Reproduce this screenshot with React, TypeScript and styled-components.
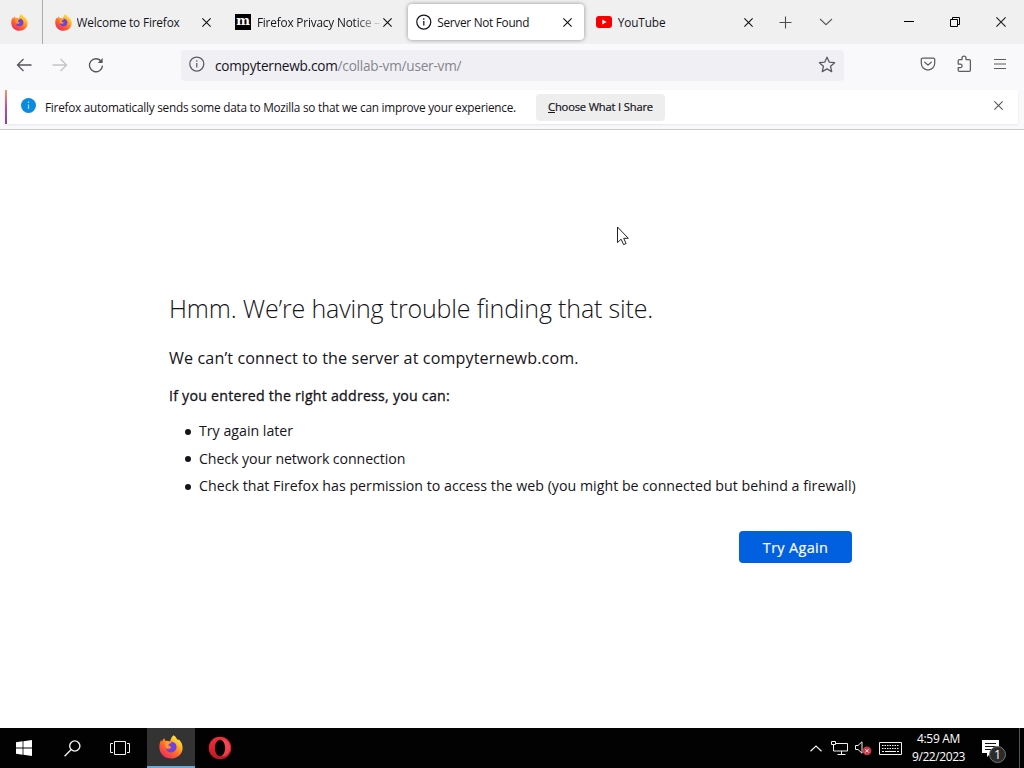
import React from 'react';
import styled, { createGlobalStyle } from 'styled-components';

const App = () => {
  return (
    <Screen>
      <GlobalStyle />
      <TabStrip>
        <PinnedTab>
          <FirefoxLogo size={17} id="pinned" />
        </PinnedTab>
        <Tabs>
          <BrowserTab icon={<FirefoxLogo size={17} id="welcome" />} title="Welcome to Firefox" spacing={-0.16} />
          <BrowserTab icon={<MozillaLogo />} title="Firefox Privacy Notice –" spacing={-0.17} faded />
          <BrowserTab icon={<InfoIcon color="#15141a" />} title="Server Not Found" spacing={-0.28} selected />
          <BrowserTab icon={<YouTubeLogo />} title="YouTube" spacing={-0.1} />
        </Tabs>
        <NewTabButton>
          <svg width="13" height="13" viewBox="0 0 13 13" fill="none" stroke="#4c4c50" strokeWidth="1.1">
            <path d="M6.5 0.5v12M0.5 6.5h12" />
          </svg>
        </NewTabButton>
        <ListTabsButton>
          <svg width="14" height="8" viewBox="0 0 14 8" fill="none" stroke="#5b5b60" strokeWidth="1.2">
            <path d="M1 1l6 5.6L13 1" />
          </svg>
        </ListTabsButton>
        <WindowControls>
          <WindowButton>
            <svg width="10" height="10" viewBox="0 0 10 10" stroke="#000">
              <path d="M0 4.5h10" />
            </svg>
          </WindowButton>
          <WindowButton>
            <svg width="10" height="10" viewBox="0 0 10 10" fill="none" stroke="#000">
              <path d="M0.5 2.5h7v7h-7zM2.5 2.5v-2h7v7h-2" />
            </svg>
          </WindowButton>
          <WindowButton>
            <CloseIcon size={10} color="#222" />
          </WindowButton>
        </WindowControls>
      </TabStrip>

      <NavBar>
        <NavButton>
          <svg width="16" height="14" viewBox="0 0 16 14" fill="none" stroke="#55555b" strokeWidth="1.3">
            <path d="M15.5 7H1.5M7.5 1L1.5 7l6 6" />
          </svg>
        </NavButton>
        <NavButton>
          <svg width="16" height="14" viewBox="0 0 16 14" fill="none" stroke="#c3c3c8" strokeWidth="1.3">
            <path d="M0.5 7h14M8.5 1l6 6-6 6" />
          </svg>
        </NavButton>
        <NavButton>
          <svg width="16" height="16" viewBox="0 0 16 16" fill="none" stroke="#55555b" strokeWidth="1.3">
            <path d="M13.4 4.6A6.5 6.5 0 1 0 14.5 8.6" />
            <path d="M14.6 1v4.9H9.8z" fill="#55555b" stroke="none" />
          </svg>
        </NavButton>
        <UrlBar>
          <InfoIcon color="#5b5b66" />
          <Url>
            compyternewb.com<UrlPath>/collab-vm/user-vm/</UrlPath>
          </Url>
          <svg width="18" height="17" viewBox="0 0 18 17" fill="none" stroke="#5b5b66" strokeWidth="1.3" strokeLinejoin="round">
            <path d="M9 1.2l2.2 4.9 5.4.6-4 3.6 1.1 5.3L9 12.9l-4.7 2.7 1.1-5.3-4-3.6 5.4-.6z" />
          </svg>
        </UrlBar>
        <ToolbarIcons>
          <NavButton $raised>
            <svg width="16" height="16" viewBox="0 0 16 16" fill="none" stroke="#5b5b60" strokeWidth="1.25" strokeLinecap="round" strokeLinejoin="round">
              <path d="M2.6 2h10.8c.7 0 1.3.6 1.3 1.3v4a6.7 6.7 0 0 1-13.4 0v-4C1.3 2.6 1.9 2 2.6 2z" />
              <path d="M4.8 6.2L8 9.1l3.2-2.9" />
            </svg>
          </NavButton>
          <NavButton $raised>
            <svg width="16" height="18" viewBox="0 0 16 18" fill="none" stroke="#5b5b60" strokeWidth="1.25" strokeLinejoin="round">
              <path d="M6 4.6V3.2a2 2 0 0 1 4 0v1.4h3.2c.7 0 1.2.5 1.2 1.2v9.4c0 .7-.5 1.2-1.2 1.2H3.4c-.7 0-1.2-.5-1.2-1.2v-2.6h2.1a1.8 1.8 0 0 0 0-3.6H2.2V5.8c0-.7.5-1.2 1.2-1.2z" />
            </svg>
          </NavButton>
          <NavButton $raised>
            <svg width="12" height="12" viewBox="0 0 12 12" stroke="#5b5b60" strokeWidth="1.2">
              <path d="M0 1.5h12M0 6h12M0 10.5h12" />
            </svg>
          </NavButton>
        </ToolbarIcons>
      </NavBar>

      <NotificationArea>
        <Notification>
          <NoticeIcon width="15" height="15" viewBox="0 0 15 15">
            <circle cx="7.5" cy="7.5" r="7.5" fill="#0a8ae0" />
            <path d="M7.5 6.5V11M7.5 3.6V5" stroke="#a5d8f5" strokeWidth="1.3" />
          </NoticeIcon>
          <NoticeText>
            Firefox automatically sends some data to Mozilla so that we can improve your experience.
          </NoticeText>
          <ChooseButton>
            <u>C</u>hoose What I Share
          </ChooseButton>
          <NoticeClose>
            <CloseIcon size={9} color="#55555b" />
          </NoticeClose>
        </Notification>
      </NotificationArea>

      <Page>
        <Heading>Hmm. We’re having trouble finding that site.</Heading>
        <ShortDescription>We can’t connect to the server at compyternewb.com.</ShortDescription>
        <Advice>If you entered the right address, you can:</Advice>
        <AdviceList>
          <AdviceItem $spacing={0}>Try again later</AdviceItem>
          <AdviceItem $spacing={-0.09}>Check your network connection</AdviceItem>
          <AdviceItem $spacing={0.015}>
            Check that Firefox has permission to access the web (you might be connected but behind a firewall)
          </AdviceItem>
        </AdviceList>
        <TryAgainButton>Try Again</TryAgainButton>
        <Pointer width="13" height="20" viewBox="0 0 13 20">
          <path d="M0.5 1v15.6l3.6-3.4 2.5 5.4 2.5-1.1-2.4-5.2h4.6z" fill="#fff" stroke="#222" strokeWidth="1" />
        </Pointer>
      </Page>

      <Taskbar>
        <TaskButton>
          <svg width="16" height="16" viewBox="0 0 16 16" fill="#fff">
            <path d="M0 2.2l6.6-.9v6.3H0zM7.4 1.2L16 0v7.6H7.4zM0 8.4h6.6v6.3L0 13.8zM7.4 8.4H16V16l-8.6-1.2z" />
          </svg>
        </TaskButton>
        <TaskButton>
          <svg width="17" height="17" viewBox="0 0 17 17" fill="none" stroke="#f2f2f2" strokeWidth="1.4">
            <circle cx="10.8" cy="6" r="5.1" />
            <path d="M7.2 9.6L0.6 16.3" />
          </svg>
        </TaskButton>
        <TaskButton>
          <svg width="20" height="14" viewBox="0 0 20 14" fill="none" stroke="#f2f2f2" strokeWidth="1">
            <path d="M4.5 0.5h11v13h-11zM3 2.5H0.5v9H3M17 2.5h2.5v9H17" />
          </svg>
        </TaskButton>
        <TaskButton $active>
          <FirefoxLogo size={24} id="task" />
        </TaskButton>
        <TaskButton>
          <svg width="24" height="24" viewBox="0 0 24 24">
            <defs>
              <linearGradient id="opera" x1="0" y1="0" x2="0" y2="1">
                <stop offset="0" stopColor="#f0303c" />
                <stop offset="1" stopColor="#c01624" />
              </linearGradient>
            </defs>
            <path fillRule="evenodd" fill="url(#opera)" d="M12 .7a11.3 11.3 0 1 0 0 22.6A11.3 11.3 0 0 0 12 .7zM12 3.8c3 0 5 3.6 5 8.2s-2 8.2-5 8.2S7 16.6 7 12s2-8.2 5-8.2z" />
            <path fill="#ff6a70" opacity=".5" d="M13.5 3.8c2.5-.7 5.5.7 7.3 3.5 2 3.2 1.7 7.5-.6 10.2-1.7 2-4.3 3-6.5 2.5 2.3-1 3.5-4.3 3.5-8s-1.4-7.2-3.7-8.2z" />
          </svg>
        </TaskButton>
        <Tray>
          <TrayIcon width="12" height="7" viewBox="0 0 12 7" fill="none" stroke="#f2f2f2" strokeWidth="1.2">
            <path d="M0.5 6.3L6 1l5.5 5.3" />
          </TrayIcon>
          <TrayIcon width="17" height="14" viewBox="0 0 17 14" fill="none" stroke="#f2f2f2" $gap={9}>
            <path d="M5 2.5h11.5v7.5H5.5M0.5 0.5h4v3h-4zM2.5 3.5v6.5h3M10.5 10v3M6.5 13.5h8" />
          </TrayIcon>
          <TrayIcon width="18" height="16" viewBox="0 0 18 16" fill="none" stroke="#f2f2f2" $gap={7}>
            <path d="M0.5 5.5h2.5L7 1.8v11.4L3 9.5H0.5z" />
            <circle cx="12" cy="10.8" r="4.4" fill="#c83a46" stroke="none" />
            <path d="M10.3 9.1l3.4 3.4M13.7 9.1l-3.4 3.4" />
          </TrayIcon>
          <TrayIcon width="23" height="13" viewBox="0 0 23 13" fill="none" stroke="#f2f2f2" $gap={6}>
            <path d="M0.5 0.5h22v12h-22z" />
            <path d="M3 3.5h17M3 6.5h17" strokeDasharray="1.5 1" />
            <path d="M3 9.5h2M6 9.5h11M18 9.5h2" />
          </TrayIcon>
          <Clock>
            <ClockLine $spacing={-0.3}>4:59 AM</ClockLine>
            <ClockLine $spacing={-0.42}>9/22/2023</ClockLine>
          </Clock>
          <ActionCenter>
            <svg width="17" height="17" viewBox="0 0 17 17">
              <path d="M0 0h17v13h-8l-4 4v-4H0z" fill="#fff" />
              <path d="M3 3.5h11M3 6.5h11M3 9.5h6" stroke="#111" />
            </svg>
            <Badge>1</Badge>
          </ActionCenter>
          <ShowDesktop />
        </Tray>
      </Taskbar>
    </Screen>
  );
};

interface BrowserTabProps {
  icon: React.ReactNode;
  title: string;
  spacing: number;
  selected?: boolean;
  faded?: boolean;
}

const BrowserTab = ({ icon, title, spacing, selected, faded }: BrowserTabProps) => {
  return (
    <TabBox $selected={selected}>
      <TabIcon>{icon}</TabIcon>
      <TabTitle $spacing={spacing} $faded={faded}>
        {title}
      </TabTitle>
      <CloseIcon size={9} color="#111" />
    </TabBox>
  );
};

const CloseIcon = ({ size, color }: { size: number; color: string }) => (
  <svg width={size} height={size} viewBox="0 0 10 10" fill="none" stroke={color} strokeWidth="1.2">
    <path d="M0.4 0.4l9.2 9.2M9.6 0.4L0.4 9.6" />
  </svg>
);

const InfoIcon = ({ color }: { color: string }) => (
  <svg width="16" height="16" viewBox="0 0 16 16" fill="none" stroke={color} strokeWidth="1.25">
    <circle cx="7.8" cy="8" r="7" />
    <path d="M7.8 7v4.6M7.8 4.2v1.5" />
  </svg>
);

const MozillaLogo = () => <MozillaBox>m</MozillaBox>;

const YouTubeLogo = () => (
  <svg width="16" height="12" viewBox="0 0 16 12">
    <rect width="16" height="12" rx="3" fill="#f60002" />
    <path d="M6.3 3.5v5L10.6 6z" fill="#fff" />
  </svg>
);

const FirefoxLogo = ({ size, id }: { size: number; id: string }) => (
  <svg width={size} height={size} viewBox="0 0 24 24">
    <defs>
      <linearGradient id={`${id}-flame`} x1=".85" y1=".05" x2=".2" y2=".95">
        <stop offset="0" stopColor="#fff04a" />
        <stop offset=".3" stopColor="#ffb52b" />
        <stop offset=".6" stopColor="#ff6a2b" />
        <stop offset="1" stopColor="#f02a5c" />
      </linearGradient>
    </defs>
    <path
      fill={`url(#${id}-flame)`}
      d="M14.6.2c2 1.300 3 2.800 3.500 4.300 1-.2 1.700 0 2.300.6 2 2 3.200 4.800 3.200 7.900C23.600 19 18.500 23.600 12 23.600S.4 18.800.4 12.600c0-3 .5-5.700 1.800-7.800.1 1 .3 1.600.6 2 .6-1.500 1.500-2.800 2.700-3.800 0 1.300.3 2.200 1 2.900 1.700-.5 3.300-.2 4.600.6.5-2.600 1.500-4.900 3.500-6.300z"
    />
    <path fill="#7044dc" d="M11.8 6.8c3.5-.2 5.8 2.2 5.8 5.2s-2.4 5.4-5.5 5.4c-2.8 0-5-1.9-5.2-4.5 1 1.3 3 1.7 4.5.7 1.1-.8 1.4-1.4.2-1.8-1.9-.4-2.6-1-2.5-2.1.7-1.1 2-1.7 3.5-1.7z" />
    <path fill="#ff9b2d" d="M6.5 7c1.9-.8 4-.5 5.6 1.1-1 .1-2 .6-2.6 1.5-.4.8.2 1.6 2 1.9-.8 1.6-2.6 2.1-4.6 1.4C6.2 10.9 6.1 8.8 6.5 7z" />
  </svg>
);

const GlobalStyle = createGlobalStyle`
  * {
    box-sizing: border-box;
  }
  body {
    margin: 0;
    overflow: hidden;
    font-family: 'Open Sans', 'Noto Sans', sans-serif;
    color: #15141a;
  }
  svg {
    display: block;
    flex-shrink: 0;
  }
`;

const Screen = styled.div`
  display: flex;
  flex-direction: column;
  width: 1024px;
  height: 768px;
  background-color: #fff;
`;

const TabStrip = styled.div`
  display: flex;
  height: 44px;
  background-color: #f0f0f0;
`;

const PinnedTab = styled.div`
  display: flex;
  align-items: center;
  width: 43px;
  padding-left: 11px;
  border-right: 1px solid #adadad;
`;

const Tabs = styled.div`
  display: flex;
  align-items: center;
  gap: 4px;
  padding-left: 4px;
`;

const TabBox = styled.div<{ $selected?: boolean }>`
  display: flex;
  align-items: center;
  width: 176.4px;
  height: 36px;
  padding: 0 12px 0 8px;
  border-radius: 4px;
  background-color: ${({ $selected }) => ($selected ? '#fff' : 'transparent')};
  box-shadow: ${({ $selected }) => ($selected ? '0 0 4px rgba(0, 0, 0, 0.4)' : 'none')};
`;

const TabIcon = styled.div`
  display: flex;
  width: 16px;
  margin-right: 5.5px;
`;

const TabTitle = styled.div<{ $spacing: number; $faded?: boolean }>`
  flex: 1;
  overflow: hidden;
  font-size: 11.8px;
  line-height: 20px;
  letter-spacing: ${({ $spacing }) => $spacing}px;
  white-space: nowrap;
  mask-image: ${({ $faded }) => ($faded ? 'linear-gradient(to left, transparent, #000 28px)' : 'none')};
`;

const MozillaBox = styled.div`
  width: 16px;
  height: 16px;
  background-color: #000;
  color: #fff;
  font-family: 'DejaVu Serif', serif;
  font-size: 13px;
  font-weight: bold;
  line-height: 14px;
  text-align: center;
  text-indent: -0.5px;
`;

const NewTabButton = styled.div`
  display: flex;
  align-items: center;
  justify-content: center;
  width: 40px;
  margin-left: 1px;
`;

const ListTabsButton = styled.div`
  display: flex;
  align-items: center;
  justify-content: center;
  width: 40px;
`;

const WindowControls = styled.div`
  display: flex;
  margin-left: auto;
`;

const WindowButton = styled.div`
  display: flex;
  align-items: center;
  justify-content: center;
  width: 46px;
`;

const NavBar = styled.div`
  display: flex;
  align-items: center;
  height: 42px;
  padding: 0 6px;
  background-color: #f9f9fb;
`;

const NavButton = styled.div<{ $raised?: boolean }>`
  display: flex;
  align-items: center;
  justify-content: center;
  width: 36px;
  height: 34px;
  padding-bottom: ${({ $raised }) => ($raised ? 2 : 0)}px;
`;

const UrlBar = styled.div`
  display: flex;
  align-items: center;
  width: 663px;
  height: 31px;
  margin-left: 67px;
  padding: 0 8px 2px;
  border-radius: 4px;
  background-color: #f0f0f4;
`;

const Url = styled.div`
  flex: 1;
  margin-left: 10px;
  padding-top: 3px;
  font-size: 13.6px;
  letter-spacing: -0.22px;
  white-space: nowrap;
`;

const UrlPath = styled.span`
  color: #85858c;
`;

const ToolbarIcons = styled.div`
  display: flex;
  margin-left: auto;
`;

const NotificationArea = styled.div`
  height: 44px;
  padding: 4px 6px 0 5px;
  border-bottom: 1px solid #cccccf;
  background-color: #f9f9fb;
`;

const Notification = styled.div`
  display: flex;
  align-items: center;
  height: 34px;
  border-left: 2px solid;
  border-image: linear-gradient(#e8a06a, #b9508c 50%, #7a3fc0) 1;
  background-color: #fff;
  box-shadow: 0 1px 2px rgba(58, 57, 68, 0.1);
`;

const NoticeIcon = styled.svg`
  margin: 0 9px 4px 14px;
`;

const NoticeText = styled.div`
  width: 491px;
  font-size: 11.8px;
  letter-spacing: -0.25px;
  white-space: nowrap;
`;

const ChooseButton = styled.div`
  width: 129px;
  height: 27px;
  border-radius: 4px;
  background-color: #eeeeef;
  font-size: 11.2px;
  letter-spacing: -0.18px;
  line-height: 26px;
  text-align: center;
  white-space: nowrap;
  -webkit-text-stroke: 0.2px currentColor;
`;

const NoticeClose = styled.div`
  margin: 0 15px 4px auto;
`;

const Page = styled.div`
  position: relative;
  flex: 1;
  padding: 158px 168px 0 169px;
`;

const Heading = styled.div`
  height: 40px;
  font-size: 25px;
  font-weight: 300;
  letter-spacing: -0.16px;
  line-height: 40px;
  white-space: nowrap;
`;

const ShortDescription = styled.div`
  margin-top: 18px;
  font-size: 16.1px;
  letter-spacing: 0.13px;
  line-height: 24px;
  white-space: nowrap;
`;

const Advice = styled.div`
  margin-top: 14px;
  font-size: 14.2px;
  letter-spacing: 0.23px;
  line-height: 24px;
  white-space: nowrap;
  -webkit-text-stroke: 0.3px currentColor;
`;

const AdviceList = styled.ul`
  margin: 9px 0 0;
  padding-left: 16px;
  list-style: none;
`;

const AdviceItem = styled.li<{ $spacing: number }>`
  display: flex;
  align-items: center;
  font-size: 14.2px;
  line-height: 27.6px;
  letter-spacing: ${({ $spacing }) => $spacing}px;
  white-space: nowrap;

  &::before {
    content: '';
    width: 6px;
    height: 6px;
    margin: 2px 8px 0 0;
    border-radius: 50%;
    background-color: #15141a;
  }
`;

const TryAgainButton = styled.div`
  width: 113px;
  height: 32px;
  margin: 31px 4px 0 auto;
  border-radius: 4px;
  background-color: #0060df;
  color: #fbfbfe;
  font-size: 14.5px;
  letter-spacing: 0.3px;
  line-height: 33px;
  text-align: center;
  -webkit-text-stroke: 0.2px currentColor;
`;

/* mouse pointer floating over the page */
const Pointer = styled.svg`
  position: absolute;
  top: 96px;
  left: 617px;
`;

const Taskbar = styled.div`
  display: flex;
  height: 40px;
  background-color: #020202;
  color: #fff;
`;

const TaskButton = styled.div<{ $active?: boolean }>`
  display: flex;
  align-items: center;
  justify-content: center;
  width: 48px;
  margin: ${({ $active }) => ($active ? '0 1px 0 3px' : '0')};
  border-bottom: ${({ $active }) => ($active ? '2px solid #6ba9dc' : 'none')};
  background-color: ${({ $active }) => ($active ? '#333' : 'transparent')};
`;

const Tray = styled.div`
  display: flex;
  align-items: center;
  margin-left: auto;
`;

const TrayIcon = styled.svg<{ $gap?: number }>`
  margin-left: ${({ $gap }) => $gap || 0}px;
`;

const Clock = styled.div`
  width: 73px;
  text-align: center;
`;

const ClockLine = styled.div<{ $spacing: number }>`
  font-size: 12px;
  line-height: 18px;
  letter-spacing: ${({ $spacing }) => $spacing}px;
`;

const ActionCenter = styled.div`
  position: relative;
  width: 44px;
  padding-left: 7px;
`;

const Badge = styled.div`
  position: absolute;
  top: 6px;
  left: 14px;
  width: 17px;
  height: 17px;
  border: 1px solid #777;
  border-radius: 50%;
  background-color: #2b2b2b;
  font-size: 12.5px;
  line-height: 16px;
  text-align: center;
`;

const ShowDesktop = styled.div`
  width: 5px;
  height: 40px;
  border-left: 1px solid #555;
`;

export default App;
